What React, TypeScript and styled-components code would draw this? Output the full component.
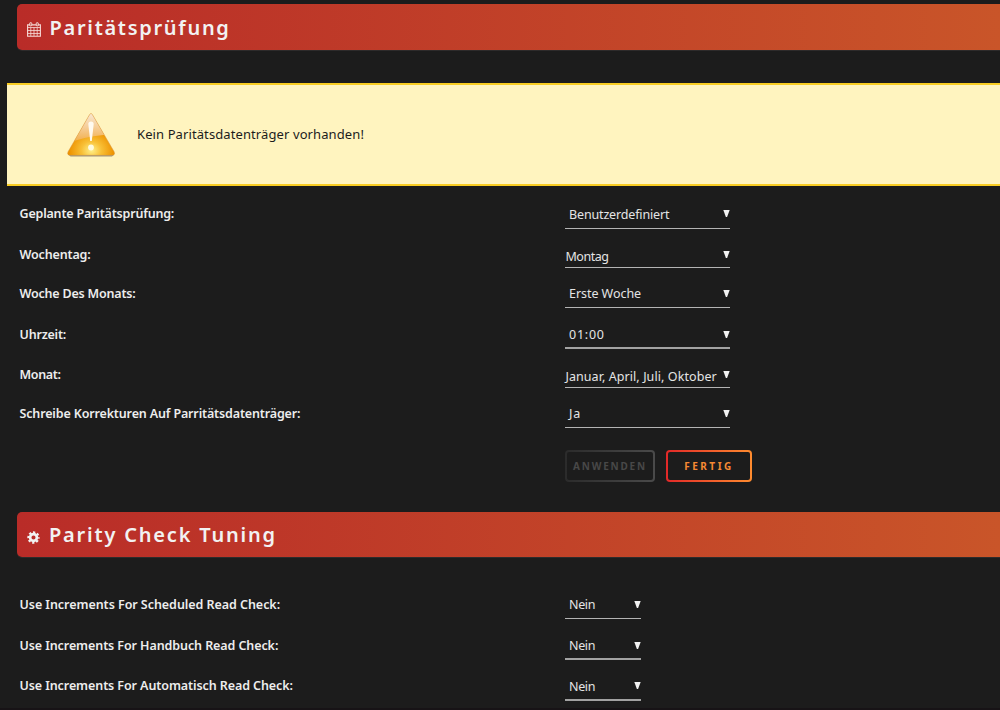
import React from "react";
import styled, { createGlobalStyle } from "styled-components";

const GlobalStyle = createGlobalStyle`
  * { box-sizing: border-box; }
  html, body { margin: 0; background: #1c1c1c; overflow: hidden; }
  body { font-family: "Noto Sans", "Open Sans", sans-serif; color: #f2f2f2; }
`;

const Page = styled.main`
  width: 1000px;
  height: 710px;
  overflow: hidden;
  background: #1c1c1c;
  border-bottom: 2px solid #171316;
  padding-top: 4px;
`;

const TitleBar = styled.header<{ $offset?: number; $height: number }>`
  display: flex;
  align-items: center;
  height: ${(p) => p.$height}px;
  margin: ${(p) => p.$offset ?? 0}px 0 0 17px;
  padding-left: 10px;
  border-radius: 5px 0 0 5px;
  background: linear-gradient(90deg, #b92c28 0%, #c95529 100%);
  box-shadow: 0 1px 0 #2d2b2b;
`;

const TitleIcon = styled.svg`
  flex: none;
  margin-top: 5px;
`;

const Title = styled.h1<{ $gap: number; $spacing: number; $drop: number }>`
  margin: ${(p) => p.$drop}px 0 0 ${(p) => p.$gap}px;
  font-size: 20px;
  line-height: 44px;
  font-weight: 600;
  letter-spacing: ${(p) => p.$spacing}px;
  color: #f2f2f2;
`;

const Notice = styled.section`
  display: flex;
  align-items: center;
  height: 103px;
  margin: 33px 0 0 7.4px;
  padding-left: 59.6px;
  border: solid #f9cd22;
  border-width: 2px 0;
  background: #fff4bf;
  color: #1c1c1c;
`;

const NoticeText = styled.p`
  margin: -2px 0 0 21px;
  font-size: 13px;
  letter-spacing: 0.1px;
`;

const Form = styled.section<{ $top: number }>`
  padding: ${(p) => p.$top}px 0 0 19.5px;
`;

const Row = styled.div<{ $height: number }>`
  display: flex;
  align-items: flex-start;
  height: ${(p) => p.$height}px;
`;

const Label = styled.label<{ $spacing: number }>`
  width: 545.5px;
  padding-top: 1px;
  font-size: 12.5px;
  line-height: 28px;
  font-weight: 600;
  letter-spacing: ${(p) => p.$spacing}px;
  color: #ededed;
`;

const Select = styled.div<{
  $width: number;
  $height: number;
  $inset: number;
  $top: number;
  $spacing: number;
  $thick?: boolean;
}>`
  display: flex;
  justify-content: space-between;
  width: ${(p) => p.$width}px;
  height: ${(p) => p.$height}px;
  padding-left: ${(p) => p.$inset}px;
  border-bottom: ${(p) => (p.$thick ? "2px solid #a2a2a2" : "1px solid #b4b4b4")};
  font-size: 12.5px;
  line-height: 28px;
  white-space: nowrap;
  letter-spacing: ${(p) => p.$spacing}px;
  color: #e4e4e4;
  > span { margin-top: ${(p) => p.$top}px; }
`;

const Arrow = styled.svg`
  flex: none;
  margin-top: 11px;
`;

const Actions = styled.div`
  display: flex;
  gap: 11px;
  padding: 11px 0 0 545.5px;
`;

const Button = styled.button<{
  $width: number;
  $from: string;
  $to: string;
  $color: string;
  $spacing: number;
}>`
  width: ${(p) => p.$width}px;
  height: 32px;
  padding: 0;
  border: 2px solid transparent;
  border-radius: 4px;
  background:
    linear-gradient(#1c1c1c, #1c1c1c) padding-box,
    linear-gradient(90deg, ${(p) => p.$from}, ${(p) => p.$to}) border-box;
  color: ${(p) => p.$color};
  font: 700 10px/28px "Noto Sans", sans-serif;
  letter-spacing: ${(p) => p.$spacing}px;
`;

const CalendarIcon = () => (
  <TitleIcon width="14" height="15" viewBox="0 0 14 15" fill="none" stroke="#f6d9d5">
    <path d="M.6 2.9h12.8v11.3H.6z" strokeWidth="1.1" />
    <path d="M.5 5.5h13M.5 8.5h13M.5 11.5h13M3.8 5.5v8.5M7 5.5v8.5M10.2 5.5v8.5" strokeWidth=".8" />
    <rect x="2.6" y=".6" width="2.2" height="3.4" rx="1" fill="#c96a62" strokeWidth=".9" />
    <rect x="9.2" y=".6" width="2.2" height="3.4" rx="1" fill="#c96a62" strokeWidth=".9" />
  </TitleIcon>
);

const GearIcon = () => (
  <TitleIcon width="13" height="13" viewBox="0 0 13 13" fill="none" stroke="#f2f2f2">
    <circle cx="6.5" cy="6.5" r="3.4" strokeWidth="2.7" />
    <circle cx="6.5" cy="6.5" r="5.2" strokeWidth="2" strokeDasharray="2.3 1.784" strokeDashoffset="1.15" />
  </TitleIcon>
);

const WarningIcon = () => (
  <svg width="49" height="45" viewBox="0 0 49 45">
    <defs>
      <radialGradient id="glow" cx=".5" cy=".88" r=".46">
        <stop offset="0" stopColor="#fff08a" />
        <stop offset=".45" stopColor="#f8bf35" />
        <stop offset="1" stopColor="#ed9200" />
      </radialGradient>
      <linearGradient id="gloss" x1="0" y1="0" x2="0" y2="1">
        <stop offset="0" stopColor="#f9ead6" />
        <stop offset=".5" stopColor="#f6cf9b" />
        <stop offset="1" stopColor="#f2b04f" />
      </linearGradient>
      <clipPath id="shape">
        <path d="M22.5 2.7Q24 .2 25.5 2.7L47.2 39.8Q48.5 43.3 45 43.3H3.2Q-.3 43.3 1 39.8Z" />
      </clipPath>
    </defs>
    <path d="M1 41.5Q2 44.6 5 44.6H43.5Q46.5 44.6 47.4 41.5Z" fill="#a3977a" />
    <g clipPath="url(#shape)">
      <path d="M0 0h49v43.5H0z" fill="url(#glow)" />
      <path d="M0 0h49v22.5Q28 22 7 29H0Z" fill="url(#gloss)" />
    </g>
    <path
      d="M22.5 2.7Q24 .2 25.5 2.7L47.2 39.8Q48.5 43.3 45 43.3H3.2Q-.3 43.3 1 39.8Z"
      fill="none"
      stroke="#d99a4c"
      strokeOpacity=".75"
      strokeWidth=".6"
    />
    <path d="M21.3 12Q21.3 9.4 24 9.4T26.7 12L24.8 29h-1.6Z" fill="#fffaf0" />
    <circle cx="24" cy="35.5" r="2.9" fill="#fffbe0" />
  </svg>
);

type Field = {
  label: string;
  value: string;
  row: number;
  height: number;
  width?: number;
  multi?: boolean;
  thick?: boolean;
  top: number;
  labelSpacing: number;
  valueSpacing: number;
};

const schedule: Field[] = [
  { label: "Geplante Paritätsprüfung:", value: "Benutzerdefiniert", row: 41, height: 30, top: 2, labelSpacing: -0.19, valueSpacing: -0.15 },
  { label: "Wochentag:", value: "Montag", row: 39, height: 28, multi: true, top: 3, labelSpacing: -0.15, valueSpacing: -0.45 },
  { label: "Woche Des Monats:", value: "Erste Woche", row: 41, height: 29, top: 1, labelSpacing: -0.2, valueSpacing: -0.05 },
  { label: "Uhrzeit:", value: "01:00", row: 40, height: 29, thick: true, top: 1, labelSpacing: -0.2, valueSpacing: 0.75 },
  { label: "Monat:", value: "Januar, April, Juli, Oktober", row: 39, height: 28, multi: true, top: 3, labelSpacing: -0.35, valueSpacing: 0.08 },
  { label: "Schreibe Korrekturen Auf Parritätsdatenträger:", value: "Ja", row: 40, height: 29, top: 1, labelSpacing: -0.15, valueSpacing: 0.8 },
];

const tuning: Field[] = [
  { label: "Use Increments For Scheduled Read Check:", value: "Nein", row: 41, height: 29, width: 76, top: 1, labelSpacing: -0.05, valueSpacing: -0.35 },
  { label: "Use Increments For Handbuch Read Check:", value: "Nein", row: 40, height: 29, width: 76, thick: true, top: 1, labelSpacing: -0.09, valueSpacing: -0.35 },
  { label: "Use Increments For Automatisch Read Check:", value: "Nein", row: 39, height: 30, width: 76, thick: true, top: 2, labelSpacing: -0.09, valueSpacing: -0.35 },
];

const Fields = ({ items }: { items: Field[] }) => (
  <>
    {items.map((f) => (
      <Row key={f.label} $height={f.row}>
        <Label $spacing={f.labelSpacing}>{f.label}</Label>
        <Select
          $width={f.width ?? 165}
          $height={f.height}
          $inset={f.multi ? 0.4 : 4}
          $top={f.top}
          $spacing={f.valueSpacing}
          $thick={f.thick}
        >
          <span>{f.value}</span>
          <Arrow width="7" height="7" viewBox="0 0 7 7">
            <path d="M.3 0h6.4L4.1 7H2.9Z" fill="#f2f2f2" />
          </Arrow>
        </Select>
      </Row>
    ))}
  </>
);

export default function App() {
  return (
    <Page>
      <GlobalStyle />
      <TitleBar $height={46}>
        <CalendarIcon />
        <Title $gap={8.5} $spacing={1.7} $drop={2}>Paritätsprüfung</Title>
      </TitleBar>
      <Notice>
        <WarningIcon />
        <NoticeText>Kein Paritätsdatenträger vorhanden!</NoticeText>
      </Notice>
      <Form $top={13}>
        <Fields items={schedule} />
        <Actions>
          <Button $width={90} $from="#2b2b2b" $to="#4a4a4a" $color="#484848" $spacing={1.8}>ANWENDEN</Button>
          <Button $width={86} $from="#e22828" $to="#ff8c2f" $color="#f68a33" $spacing={2.5}>FERTIG</Button>
        </Actions>
      </Form>
      <TitleBar $offset={30} $height={45}>
        <GearIcon />
        <Title $gap={9} $spacing={1.8} $drop={0}>Parity Check Tuning</Title>
      </TitleBar>
      <Form $top={33}>
        <Fields items={tuning} />
      </Form>
    </Page>
  );
}
